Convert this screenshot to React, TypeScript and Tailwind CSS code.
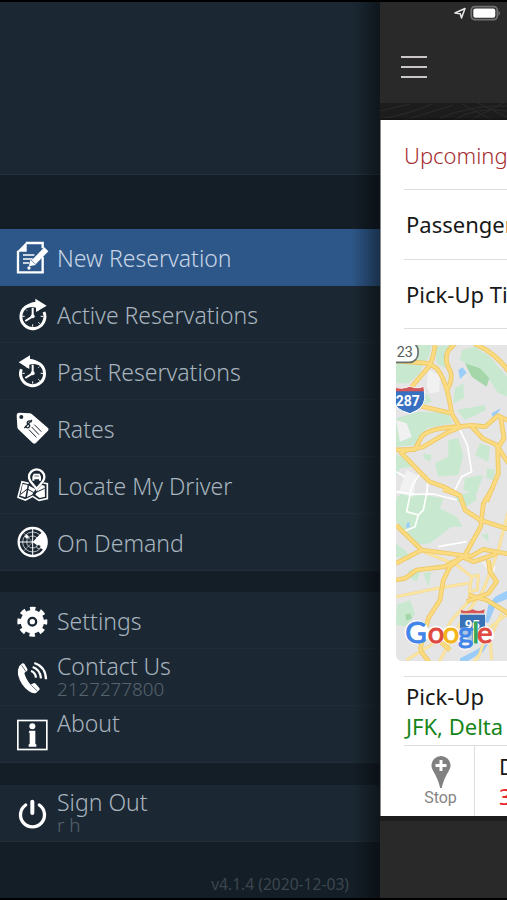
import type { ReactNode } from "react";

function Glyph({ children }: { children: ReactNode }) {
  return (
    <svg viewBox="0 0 171 171" className="h-[57px] w-[57px] shrink-0" fill="none" stroke="white">
      {children}
    </svg>
  );
}

function ReservationIcon() {
  return (
    <Glyph>
      <path d="M78 42H128V58M128 84V130H54V65" strokeWidth="7" />
      <path d="M51 68L80 38V68Z" fill="white" stroke="none" />
      <path d="M69 78H103M69 90H98M69 102H88" strokeWidth="5" />
      <path d="M101 100L139 61" strokeWidth="17" />
      <path d="M91 92L108 108L87 112Z" fill="white" stroke="none" />
      <circle cx="87" cy="117" r="5" fill="white" stroke="none" />
    </Glyph>
  );
}

function ClockFace() {
  return (
    <>
      <path d="M98 65V91L76 105" strokeWidth="6" />
      <circle cx="98" cy="91" r="6" fill="white" stroke="none" />
      <path d="M98 115V122M122 91H129M67 91H74M78 71L81 74M115 109L119 113M118 71L115 74" strokeWidth="3" />
    </>
  );
}

function ActiveIcon() {
  return (
    <Glyph>
      <path d="M108 57A36 36 0 1 0 132 78" strokeWidth="9" />
      <path d="M80 61Q92 47 106 48V38L140 59L108 78V65Q96 60 82 66Z" fill="white" stroke="none" />
      <ClockFace />
    </Glyph>
  );
}

function PastIcon() {
  return (
    <Glyph>
      <path d="M89 57A36 36 0 1 1 64 79" strokeWidth="9" />
      <path d="M117 61Q104 47 90 48V37L56 58L88 78V65Q101 60 115 66Z" fill="white" stroke="none" />
      <ClockFace />
    </Glyph>
  );
}

function RatesIcon() {
  return (
    <Glyph>
      <path
        d="M58 38L89 40Q93 40 96 43L144 84Q148 88 144 92L107 130Q103 133 98 129L55 88Q52 85 52 80L50 47Q50 38 58 38Z"
        fill="white"
        stroke="none"
      />
      <circle cx="64" cy="51" r="6" fill="#1b2833" stroke="none" />
      <g stroke="#1b2833" strokeWidth="4">
        <path d="M103 74L124 95M95 81L117 104M87 89L109 112" strokeWidth="3" />
        <path d="M95 66Q88 60 83 65Q79 71 86 73Q92 76 87 82Q82 86 75 79M96 60L73 84" />
      </g>
    </Glyph>
  );
}

function LocateIcon() {
  return (
    <Glyph>
      <path d="M86 79L66 74L54 121L76 129L98 118L117 130L142 125V80L130 78" strokeWidth="5" />
      <path d="M68 81L61 116L76 121L83 84ZM87 86L81 120L96 113L107 97ZM114 96L106 113L119 123L135 119L134 86L125 84Z" fill="white" stroke="none" />
      <path d="M62 112L82 96L104 108L134 94" stroke="#1b2833" strokeWidth="3" />
      <path d="M110 96C103 84 87 75 87 60A23 23 0 0 1 133 60C133 75 117 84 110 96Z" fill="#1b2833" strokeWidth="7" />
      <path d="M97 59L101 50H119L123 59V71H117V67H103V71H97Z" fill="white" stroke="none" />
      <path d="M103 57H117" stroke="#1b2833" strokeWidth="2" />
    </Glyph>
  );
}

function RadarIcon() {
  return (
    <Glyph>
      <circle cx="98" cy="84" r="42" strokeWidth="7" />
      <circle cx="98" cy="84" r="30" strokeWidth="2" />
      <circle cx="98" cy="84" r="18" strokeWidth="2" />
      <path d="M98 42V126M56 84H140" strokeWidth="3" />
      <path d="M69 55L98 84L69 113" strokeWidth="1.5" />
      <path d="M98 84L127 53Q141 67 141 86Q141 101 133 110Z" fill="white" stroke="none" />
      <path d="M80 61L87 68L80 74L74 68Z" fill="white" stroke="none" />
      <circle cx="116" cy="98" r="6" fill="#1b2833" strokeWidth="2" />
    </Glyph>
  );
}

function GearIcon() {
  return (
    <Glyph>
      <circle cx="97" cy="89" r="25" strokeWidth="20" />
      <circle cx="97" cy="89" r="38" strokeWidth="14" strokeDasharray="16 13.845" strokeDashoffset="8" />
      <circle cx="97" cy="89" r="8" fill="white" stroke="none" />
    </Glyph>
  );
}

function PhoneIcon() {
  return (
    <Glyph>
      <path
        d="M58 51L67 43Q72 42 74 46L82 60Q84 64 80 67L73 72Q78 92 92 107L100 103Q104 101 107 104L118 117Q121 121 117 124L108 132Q99 135 87 127Q62 109 54 77Q52 61 58 51Z"
        fill="white"
        stroke="none"
      />
      <path d="M65 49L78 68M94 109L112 126" stroke="#1b2833" strokeWidth="2" />
      <path d="M93 66Q106 70 108 86M98 54Q120 61 123 88M103 42Q137 53 138 91" strokeWidth="7" />
    </Glyph>
  );
}

function InfoIcon() {
  return (
    <Glyph>
      <rect x="53.5" y="43.5" width="87" height="87" strokeWidth="5" />
      <circle cx="97" cy="61" r="9" fill="white" stroke="none" />
      <path d="M88 74H106V115H109V122H86V115H89V80H86Z" fill="white" stroke="none" />
    </Glyph>
  );
}

function PowerIcon() {
  return (
    <Glyph>
      <path d="M77 60A36 36 0 1 0 118 60" strokeWidth="10" strokeLinecap="round" />
      <path d="M97 50V84" strokeWidth="12" strokeLinecap="round" />
    </Glyph>
  );
}

type RowProps = { icon: ReactNode; label: string; sub?: string; active?: boolean; raised?: boolean };

function MenuRow({ icon, label, sub, active, raised }: RowProps) {
  return (
    <div className={`flex h-[57px] border-b ${active ? "border-[#2d5585] bg-[#2d5788] text-[#c8d5e5]" : "border-[#202d37] bg-[#1b2833] text-[#a8b4bf]"}`}>
      {icon}
      <div className={`whitespace-nowrap font-light ${raised ? "pt-[2px]" : "pt-[14px]"}`}>
        <div className="text-[23px] leading-[30px]">{label}</div>
        {sub && <div className="-mt-[2px] text-[18.8px] leading-[20px] text-[#58636d]">{sub}</div>}
      </div>
    </div>
  );
}

function Sidebar() {
  return (
    <aside className="relative flex h-[896px] w-[380px] shrink-0 flex-col bg-[#141e27]">
      <div className="h-[173px] shrink-0 border-b border-[#26323b] bg-[#1b2833]" />
      <div className="h-[54px] shrink-0" />
      <nav>
        <MenuRow icon={<ReservationIcon />} label="New Reservation" active />
        <MenuRow icon={<ActiveIcon />} label="Active Reservations" />
        <MenuRow icon={<PastIcon />} label="Past Reservations" />
        <MenuRow icon={<RatesIcon />} label="Rates" />
        <MenuRow icon={<LocateIcon />} label="Locate My Driver" />
        <MenuRow icon={<RadarIcon />} label="On Demand" />
      </nav>
      <nav className="mt-[21px]">
        <MenuRow icon={<GearIcon />} label="Settings" />
        <MenuRow icon={<PhoneIcon />} label="Contact Us" sub="2127277800" raised />
        <MenuRow icon={<InfoIcon />} label="About" raised />
      </nav>
      <nav className="mt-[22px]">
        <MenuRow icon={<PowerIcon />} label="Sign Out" sub="r h" raised />
      </nav>
      <div className="mt-[31px] pr-[31px] text-right text-[15.6px] leading-[22px] text-[#3c464e]">v4.1.4 (2020-12-03)</div>
      <div className="absolute inset-y-0 right-0 w-[28px] bg-linear-to-r from-transparent to-black/45" />
    </aside>
  );
}

const HIGHWAYS = [
  "M40 92L145 100L170 115Q200 150 215 250L238 290",
  "M166 40Q160 90 145 112L95 170",
  "M225 40L205 62Q190 90 212 125Q218 150 202 178",
  "M120 228L215 250",
  "M40 360L105 358L125 320Q145 295 235 290L275 286L315 290L353 257L385 272",
  "M65 365L130 350L205 306L245 290",
  "M275 290L308 325L350 345L385 400",
  "M362 262L372 325L353 355L355 430L320 515",
  "M60 365L148 455L190 470L240 497",
  "M282 40Q350 70 390 130",
  "M190 478L240 497L255 540L300 570L385 597",
  "M340 470L310 520L302 590L255 675L210 710L190 750L180 810L145 865L120 960",
  "M48 585L125 660L240 675L275 678L310 658L385 672",
  "M48 700L125 660",
  "M48 750L75 745L110 720L195 710L250 680",
  "M245 680L280 695L325 680L350 670",
  "M325 690L330 725L350 755L325 790L260 815",
  "M265 795L320 810L385 850",
  "M120 960L150 1000M210 960L175 930",
];

const BYWAYS = [
  "M385 545L355 660L310 780L250 865L205 945L175 1000",
  "M48 800L180 773L265 760",
  "M130 665L230 705L275 740",
  "M270 810L215 870L185 925L80 990",
  "M385 850L325 895L300 970L280 1000",
  "M275 740L295 735L292 780L268 785Z",
  "M365 850L330 925L335 990",
];

const GOOGLE = [
  { x: 76, letter: "G", fill: "#4285e8" },
  { x: 143, letter: "o", fill: "#df4a40" },
  { x: 188, letter: "o", fill: "#f3b51b" },
  { x: 234, letter: "g", fill: "#4285e8" },
  { x: 277, letter: "l", fill: "#35a654" },
  { x: 291, letter: "e", fill: "#df4a40" },
];

function RouteMap() {
  return (
    <svg viewBox="48 45 333 948" className="h-[316px] w-[111px] shrink-0 rounded-l-[6px]" preserveAspectRatio="none">
      <rect x="48" y="45" width="340" height="950" fill="#e5e5e6" />
      <g fill="#c8e9cf">
        <path d="M48 45H155L145 85L130 100L120 130L85 160H48ZM165 50L215 45L200 70L195 115L170 100ZM245 60L285 50L330 80L385 145V200L355 190L325 145L290 120L240 90ZM48 265L115 245L205 250L218 280L140 295L112 345L48 350Z" />
        <path d="M225 175L250 160L252 205L220 220ZM230 240L315 225L318 240L255 270ZM205 330L235 325L250 375L235 435L175 440L165 400L205 380ZM130 370L155 375L150 395L130 385ZM300 340L330 350L325 395L285 375ZM255 445L310 435L290 490L250 480ZM320 415L345 420L340 450L320 445Z" />
        <path d="M65 490L130 495L190 505L180 535L230 560L248 590L215 590L170 625L150 640L110 645L80 620L48 570V505ZM48 640L80 665L95 690L48 680ZM85 720L125 715L110 755L85 740ZM130 730L155 725L145 770ZM50 825L90 810L105 850L85 890L48 885ZM225 500L285 480L290 510L250 535ZM305 615L325 610L325 635Z" />
        <path d="M48 375L80 385L95 410L60 415L48 440ZM105 190L145 195L155 215L130 225Z" />
      </g>
      <g fill="#f1f1f1">
        <path d="M145 120L180 135L178 185L150 190L140 170ZM48 270L80 280L95 320L60 335ZM80 420L110 435L100 500L55 490ZM300 690L350 710L335 735Z" />
      </g>
      <path d="M255 100L300 115L328 145L320 170L275 140Z" fill="#a5d6a9" />
      <path d="M75 855L90 850L96 865L80 872Z" fill="#a5d6a9" />
      <g fill="#9cccf8">
        <path d="M235 120L248 112L260 128L240 147ZM190 75L200 80L195 95ZM335 250L362 235L350 255L337 260ZM80 580L88 575L90 592L78 594ZM385 780L345 800L325 825L315 875L325 880L350 820L385 805ZM240 985L270 970L325 940L310 965L260 995H240Z" />
      </g>
      <g fill="none" stroke="white" strokeWidth="5">
        <path d="M235 290L262 345L275 425L245 440L220 490M48 485L105 493L160 492L230 510M145 440L140 495M120 430L95 470L80 545L115 555L105 590L70 605M175 650L260 635M140 490L130 540L115 555M75 440L48 425" />
      </g>
      <g fill="none" stroke="#f3d68c" strokeWidth="9" strokeLinejoin="round">
        {BYWAYS.map((d) => <path key={d} d={d} />)}
      </g>
      <g fill="none" stroke="#fce6a4" strokeWidth="6" strokeLinejoin="round">
        {BYWAYS.map((d) => <path key={d} d={d} />)}
      </g>
      <g fill="none" stroke="#efc663" strokeWidth="14" strokeLinejoin="round">
        {HIGHWAYS.map((d) => <path key={d} d={d} />)}
      </g>
      <g fill="none" stroke="#fadb80" strokeWidth="9" strokeLinejoin="round">
        {HIGHWAYS.map((d) => <path key={d} d={d} />)}
      </g>

      <rect x="20" y="36" width="94" height="61" rx="26" fill="white" stroke="#68706c" strokeWidth="5" />
      <text x="50" y="80" fontSize="43" fill="#555b59" fontFamily="Roboto, sans-serif">23</text>

      <path d="M36 172Q55 181 90 170Q115 180 130 170L134 190Q138 225 111 241L90 251L68 243Q44 232 42 210Z" fill="#3871c2" stroke="white" strokeWidth="3" />
      <path d="M48 173Q65 181 90 170Q115 180 130 170L132 184H48Z" fill="#d75758" />
      <text x="47" y="229" fontSize="42" fontWeight="700" fill="white" fontFamily="Roboto, sans-serif">287</text>

      <path d="M242 839Q260 848 278 838Q296 848 314 838L312 850H244Z" fill="#d75758" />
      <path d="M240 854H315V900Q300 925 278 934Q253 924 240 900Z" fill="#3871b5" />
      <text x="254" y="898" fontSize="40" fontWeight="700" fill="white" fontFamily="Roboto, sans-serif">95</text>

      {/* white halo behind the wordmark */}
      <g fill="white">
        <circle cx="110" cy="907" r="36" />
        <circle cx="168" cy="915" r="28" />
        <circle cx="212" cy="915" r="28" />
        <path d="M234 897Q256 886 276 897V945Q272 962 254 962Q238 960 234 946Z" opacity="0.6" />
        <path d="M278 878H293V942H278Z" />
        <circle cx="315" cy="916" r="27" />
      </g>
      <g fontFamily="Lato, sans-serif" fontSize="88" strokeWidth="3">
        {GOOGLE.map(({ x, letter, fill }) => (
          <text key={x} x={x} y="938" fill={fill} stroke={fill}>
            {letter}
          </text>
        ))}
      </g>
    </svg>
  );
}

function StatusBar() {
  return (
    <svg viewBox="0 0 127 25" className="h-[25px] w-[127px]">
      <path d="M75 11L85 6.5L81.5 16L80.3 11.8Z" fill="none" stroke="#e8e8e8" strokeWidth="1.5" strokeLinejoin="round" />
      <rect x="91.3" y="4.6" width="26" height="13" rx="3.6" fill="#292929" stroke="#707070" strokeWidth="1.8" />
      <rect x="93.3" y="6.5" width="22" height="9.3" rx="2" fill="white" />
      <path d="M118.5 8.5Q121.5 11.3 118.5 14Z" fill="#707070" />
    </svg>
  );
}

function Main() {
  return (
    <main className="flex h-[896px] w-[127px] flex-col overflow-hidden whitespace-nowrap bg-[#292929]">
      <header className="h-[101px] shrink-0">
        <StatusBar />
        <div className="ml-[21px] mt-[29px] flex w-[26px] flex-col gap-[8px]">
          <span className="h-[2px] bg-[#c9c5c8]" />
          <span className="h-[2px] bg-[#c9c5c8]" />
          <span className="h-[2px] bg-[#c9c5c8]" />
        </div>
      </header>
      <svg viewBox="0 0 127 17" className="h-[17px] w-[127px] shrink-0 bg-[#1c1c1c]" fill="none" stroke="#2b2b2b">
        <path d="M0 8L30 1M0 16Q30 11 52 1M25 17L73 2M60 15Q90 2 127 3M74 17Q97 3 127 8M82 1L112 17M98 0L127 14M91 17L123 0" />
        <path d="M0 16H127" stroke="#111" />
      </svg>
      <section className="flex h-[696px] shrink-0 flex-col border-l border-[#888] bg-white text-[22px] text-[#181818]">
        <div className="ml-[23px] h-[70px] shrink-0 border-b border-[#dedede] pt-[20px] font-light leading-[30px] text-[#a52e30]">Upcoming</div>
        <div className="ml-[23px] h-[70px] shrink-0 border-b border-[#dedede] pl-[2px] pt-[19px] leading-[30px]">Passenger</div>
        <div className="ml-[23px] h-[69px] shrink-0 border-b border-[#dedede] pl-[2px] pt-[19px] leading-[30px]">Pick-Up Time</div>
        <div className="ml-[15px] mt-[16px] h-[316px] shrink-0"><RouteMap /></div>
        <div className="ml-[23px] mt-[15px] h-[70px] shrink-0 border-y border-[#dedede] pl-[2px] pt-[4px]">
          <div className="leading-[30px]">Pick-Up</div>
          <div className="leading-[31px] text-[#168519]">JFK, Delta</div>
        </div>
        <div className="ml-[23px] flex h-[70px] shrink-0">
          <div className="flex w-[71px] shrink-0 flex-col items-center border-r border-[#dedede] pl-[3px] pt-[10px]">
            <svg viewBox="0 0 20 33" className="h-[33px] w-[20px]">
              <path d="M10 0A9.5 9.5 0 0 1 19.5 9.5C19.5 15 14 18 10.8 32H9.2C6 18 .5 15 .5 9.5A9.5 9.5 0 0 1 10 0Z" fill="#808080" />
              <path d="M10 4V15M4.5 9.5H15.5" stroke="white" strokeWidth="3" />
            </svg>
            <div className="font-[Roboto,sans-serif] text-[16px] leading-[18px] text-[#858585]">Stop</div>
          </div>
          <div className="pl-[24px] pt-[5px]">
            <div className="leading-[30px]">Drop-Off</div>
            <div className="leading-[30px] text-[#e8202a]">37</div>
          </div>
        </div>
      </section>
      <div className="h-[5px] shrink-0 bg-[#1c1c1c]" />
    </main>
  );
}

export default function App() {
  return (
    <div className="h-[900px] w-[507px] overflow-hidden bg-black py-[2px] font-['Noto_Sans',sans-serif]">
      <div className="flex">
        <Sidebar />
        <Main />
      </div>
    </div>
  );
}
